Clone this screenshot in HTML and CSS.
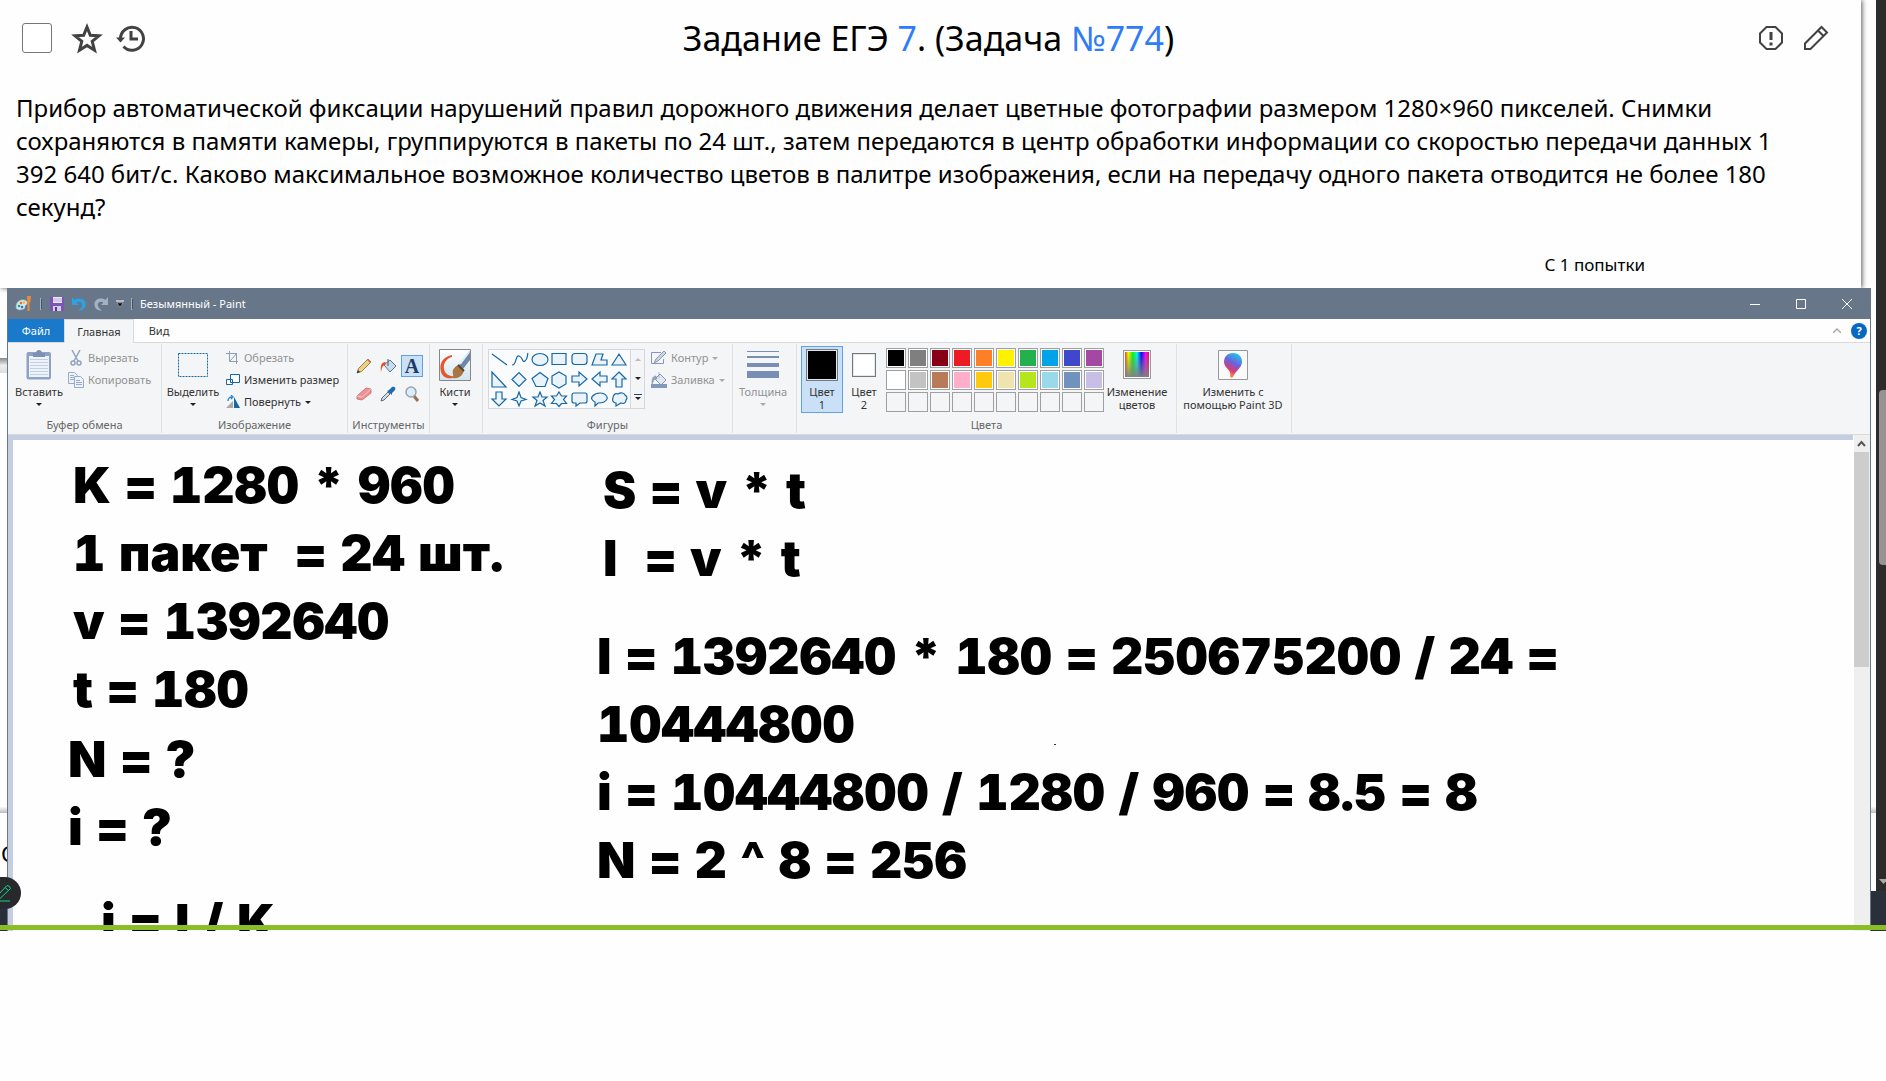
FILE: index.html
```html
<!DOCTYPE html>
<html lang="ru">
<head>
<meta charset="utf-8">
<title>Задание ЕГЭ 7</title>
<link rel="stylesheet" href="styles.css">
</head>
<body>
<div class="screen">
  <main class="page">
    <section class="task">
      <header class="task-head">
        <div class="tools-left">
          <input type="checkbox" class="tick" aria-label="Решено">
          <button class="icon-btn" aria-label="В избранное"><svg width="32" height="32" viewBox="0 0 32 32" fill="none" stroke="#424242" stroke-width="3" stroke-linejoin="miter"><path d="M16 5l3.300 8.200 8.700.6-6.800 5.600 2.300 8.800L16 23.400l-7.500 4.800 2.300-8.800L4 13.800l8.700-.6z"/></svg></button>
          <button class="icon-btn" aria-label="История"><svg width="32" height="32" viewBox="0 0 32 32" fill="none" stroke="#424242" stroke-width="3"><path d="M6.500 17A11.500 11.500 0 1 1 9.500 24.500M17 9v8h7"/><path d="M2 15.500h9l-4.500 5z" fill="#424242" stroke="none"/></svg></button>
        </div>
        <h1>Задание ЕГЭ <a href="#t7">7</a>. (Задача <a href="#774">№774</a>)</h1>
        <div class="tools-right">
          <button class="icon-btn" aria-label="Сообщить об ошибке"><svg width="26" height="26" viewBox="0 0 26 26" fill="none" stroke="#424242" stroke-width="2"><path d="M8.500 2h9L24 8.500v9L17.500 24h-9L2 17.500v-9z"/><path d="M13 7v8M13 17.500v3" stroke-width="3"/></svg></button>
          <button class="icon-btn" aria-label="Редактировать"><svg width="26" height="26" viewBox="0 0 26 26" fill="none" stroke="#424242" stroke-width="2"><path d="M2 24v-5.500L18.500 2 24 7.500 7.500 24zM15 5.500l5.500 5.500"/></svg></button>
        </div>
      </header>
      <p class="statement">Прибор автоматической фиксации нарушений правил дорожного движения делает цветные фотографии размером 1280×960 пикселей. Снимки сохраняются в памяти камеры, группируются в пакеты по 24 шт., затем передаются в центр обработки информации со скоростью передачи данных 1 392 640 бит/с. Каково максимальное возможное количество цветов в палитре изображения, если на передачу одного пакета отводится не более 180 секунд?</p>
      <p class="attempt">С 1 попытки</p>
    </section>
    <div class="seam seam-top"></div>
    <div class="seam seam-bottom"></div>
    <span class="behind">С</span>
    <div class="taskbar"></div>

    <section class="paint">
      <div class="titlebar">
        <div class="quick">
          <svg width="18" height="18" viewBox="0 0 18 18"><path d="M1 12c0-5 4-8 8-7 4 0 4 4 2 5s0 3-2 4-8 2-8-2z" fill="#d3e6ef" stroke="#7fb0c8" stroke-width=".6"/><circle cx="4" cy="11" r="1.300" fill="#2a7"/><circle cx="6" cy="8" r="1.300" fill="#e63"/><circle cx="9" cy="7.500" r="1.200" fill="#fb0"/><circle cx="7" cy="12" r="1.300" fill="#27c"/><path d="M12 1h4l-.5 5-1 2v8h-2V8z" fill="#e88a3c"/></svg>
          <i class="bar"></i>
          <button class="tb" aria-label="Сохранить"><svg width="14" height="14" viewBox="0 0 14 14"><path d="M0 0h14v14H0z" fill="#7b55b5"/><path d="M3 0h9v6H3z" fill="#f1e9f8"/><path d="M3 2h9M3 4h9" stroke="#bda6d8"/><path d="M3 9h8v5H3z" fill="#d8cce8"/><path d="M5 10h2v4H5z" fill="#543b86"/></svg></button>
          <button class="tb" aria-label="Отменить"><svg width="14" height="14" viewBox="0 0 14 14"><path d="M0 0v8h7L4.500 5.500C8 3.500 11 6 10 9c-.5 2-2 3-4 4.500 5 .5 8-3 7.500-7C13 2 7 0 2.500 3z" fill="#2ba1e6"/></svg></button>
          <button class="tb" aria-label="Вернуть"><svg width="14" height="14" viewBox="0 0 14 14"><path d="M14 0v8H7l2.500-2.500C6 3.500 3 6 4 9c.5 2 2 3 4 4.500C3 14 0 10.500.5 6.500 1 2 7 0 11.500 3z" fill="#a5b1c5"/></svg></button>
          <button class="tb" aria-label="Настройка панели"><svg width="8" height="8" viewBox="0 0 8 8"><path d="M0 1h8M0 0" stroke="#fff"/><path d="M1 3h6L4 7z" fill="#000" stroke="#ccc" stroke-width=".5"/></svg></button>
          <i class="bar"></i>
        </div>
        <span class="caption">Безымянный - Paint</span>
        <div class="controls">
          <button aria-label="Свернуть"><svg width="10" height="10"><path d="M0 5.500h10" stroke="#fff"/></svg></button>
          <button aria-label="Развернуть"><svg width="10" height="10"><path d="M.5.500h9v9h-9z" fill="none" stroke="#fff"/></svg></button>
          <button aria-label="Закрыть"><svg width="10" height="10"><path d="M0 0l10 10M10 0L0 10" stroke="#fff"/></svg></button>
        </div>
      </div>
      <nav class="tabs">
        <button class="tab file">Файл</button><button class="tab active">Главная</button><button class="tab">Вид</button>
        <div class="help">
          <svg width="8" height="5" viewBox="0 0 8 5"><path d="M0 5l4-4 4 4" fill="none" stroke="#a5a5a5" stroke-width="1.300"/></svg>
          <button class="q" aria-label="Справка">?</button>
        </div>
      </nav>

      <div class="ribbon">
        <div class="group g-clip">
          <div class="body">
            <button class="big"><span class="pic"><svg width="26" height="30" viewBox="0 0 26 30"><rect x=".5" y="2" width="24.500" height="27.500" rx="2" fill="#8ea2c4"/><path d="M3 6h20v21H3z" fill="#eef2f9"/><path d="M4 9.500h18M4 12.500h18M4 15.500h18M4 18.500h18M4 21.500h18M4 24.500h18" stroke="#c3d0e4"/><path d="M7 7V3h3c0-4 6-4 6 0h3v4z" fill="#7b90b2"/></svg></span>Вставить<i class="dn"></i></button>
            <div class="list">
              <button class="row off"><svg width="16" height="16" viewBox="0 0 16 16" fill="none" stroke="#93a2be" stroke-width="1.500"><path d="M4 0l6 11M12 0L6 11"/><circle cx="5" cy="13" r="2"/><circle cx="11" cy="13" r="2"/></svg>Вырезать</button>
              <button class="row off"><svg width="16" height="16" viewBox="0 0 16 16" fill="#edf1f8" stroke="#9aabc8"><path d="M.5.500h6l3 3v8h-9z"/><path d="M6.500 4.500h6l3 3v8h-9zM8 8.500h4M8 10.500h6M8 12.500h6M2 3.500h4M2 5.500h4M2 7.500h4"/></svg>Копировать</button>
            </div>
          </div>
          <div class="name">Буфер обмена</div>
        </div>
        <div class="group g-image">
          <div class="body">
            <button class="big"><span class="pic"><svg width="30" height="24"><path d="M.5.500h29v23h-29z" fill="none" stroke="#1667a6" stroke-dasharray="2 1"/></svg></span>Выделить<i class="dn"></i></button>
            <div class="list">
              <button class="row off"><svg width="14" height="14" viewBox="0 0 14 14" fill="none" stroke="#8f9db5"><path d="M0 2.500h10.500V13M3.500 0v10.500H12M4 10l7-8"/></svg>Обрезать</button>
              <button class="row"><svg width="14" height="14" viewBox="0 0 14 14" fill="#fff" stroke="#1667a6"><path d="M4.500 1.500h9v8h-9zM.5 6.500h6v5h-6z"/></svg>Изменить размер</button>
              <button class="row"><svg width="14" height="14" viewBox="0 0 14 14"><path d="M0 13l7-7v7z" fill="#aaa"/><path d="M8 13V2l6 11z" fill="#1667a6"/><path d="M2 6c0-3 2-4 4-4M5 0l2 2-2 2" fill="none" stroke="#2586d0" stroke-width="1.300"/></svg>Повернуть<i class="dn"></i></button>
            </div>
          </div>
          <div class="name">Изображение</div>
        </div>
        <div class="group g-tools">
          <div class="body toolgrid">
            <button aria-label="Карандаш"><svg width="16" height="16" viewBox="0 0 16 16"><path d="M1 15l1.500-4.500L12 1l3 3-9.500 9.500z" fill="#f2d07c" stroke="#766743" stroke-width=".8"/><path d="M11 2l3 3 1-1-3-3z" fill="#d66"/><path d="M1 15l1-3 2 2z" fill="#333"/></svg></button>
            <button aria-label="Заливка"><svg width="16" height="16" viewBox="0 0 16 16"><path d="M4 7l6-5 6 6-6 6z" fill="#c7ddef" stroke="#5c7892"/><path d="M8 1v7" stroke="#555"/><path d="M6 4.500C2 3 0 7 1 14c1-4 1-6 4-7z" fill="#e4512c"/></svg></button>
            <button class="on letter" aria-label="Текст">A</button>
            <button aria-label="Ластик"><svg width="16" height="16" viewBox="0 0 16 16"><path d="M1 10l9-8 5 1v4l-9 7-5-1z" fill="#ee9295" stroke="#c96468" stroke-width=".8"/><path d="M1 10l5 1 9-8" fill="none" stroke="#fac5c5"/></svg></button>
            <button aria-label="Палитра"><svg width="16" height="16" viewBox="0 0 16 16"><path d="M1 15l1-3 6-6 2 2-6 6z" fill="#cfe0ed" stroke="#667"/><path d="M7 5l2-1 3-3c3-1 4 1 3 3l-3 3v2z" fill="#1e6cae"/></svg></button>
            <button aria-label="Масштаб"><svg width="16" height="16" viewBox="0 0 16 16"><path d="M10 10l4 5" stroke="#9b7049" stroke-width="3"/><circle cx="7" cy="6" r="5" fill="#dcecf8" stroke="#9aa4ae" stroke-width="1.500"/></svg></button>
          </div>
          <div class="name">Инструменты</div>
        </div>
        <div class="group g-brush">
          <div class="body">
            <button class="big"><span class="pic"><svg width="32" height="32" viewBox="0 0 32 32"><defs><linearGradient id="bg" x2="0" y2="1"><stop stop-color="#fff"/><stop offset="1" stop-color="#d3e5f1"/></linearGradient></defs><path d="M.5.500h31v31H.5z" fill="url(#bg)" stroke="#888"/><path d="M13 6C3 8 0 15 2 23c2 7 11 8 15 4-5 1-11-1-12-7C4 14 8 9 13 8z" fill="#e2572b"/><path d="M31 2v9l-7 9-4-4z" fill="#6c87a8"/><path d="M30 3L21 15" stroke="#e2ebf3" stroke-width="2"/><path d="M20 16l5 5c-1 6-6 9-11 8 1-2-1-6 0-8s4-5 6-5z" fill="#a97540"/><path d="M19 16l6 6" stroke="#59432e" stroke-width="2"/></svg></span>Кисти<i class="dn"></i></button>
          </div>
        </div>
        <div class="group g-shapes">
          <div class="body">
            <div class="gallery">
              <svg width="141" height="58" viewBox="0 0 141 58" fill="#eaf3fa" stroke="#1667a6" stroke-width="1.200"><path d="M3 4l15 11M23 15c5 0 3-10 7-9s3 7 6 5 2-5 3-8" fill="none"/><ellipse cx="51" cy="9.500" rx="8" ry="6"/><path d="M63 3.500h14v11H63z"/><rect x="83" y="3.500" width="15" height="11" rx="3"/><path d="M103 15l4-11h7l-2 6h6v5zM123 15l7-11 7 11z"/><path d="M3 22v15h14zM23 29.500l7-7 7 7-7 7zM43 28.500l8-6 8 6-3 8h-9zM63 26l7-4 7 4v8l-7 4-7-4zM83 26h7v-4l8 7-8 7v-4h-7zM118 26h-7v-4l-8 7 8 7v-4h7zM130 22l7 7h-4v8h-6v-8h-4z"/><path d="M7 42h6v7h4l-7 7-7-7h4zM30 42l2 5.500 5 2-5 1.500-2 5-2-5-5-1.500 5-2zM51 42l2 5h5l-4 3.500 2 5.500-5-3-5 3 2-5.500-4-3.500h5zM70 42l2.500 4h5l-3 3.500 3 4h-5l-2.500 3-2.500-3h-5l3-4-3-3.500h5zM85 43h11q2 0 2 2v6q0 2-2 2h-5l-4 3v-3h-2q-2 0-2-2v-6q0-2 2-2zM106 52c-8-4 0-9 5-9s11 5 4 9c-2 1-4 1-6 1l-3 3zM124 48c0-3 2-5 5-4 3-2 6-1 7 1 3 2 2 4 1 5 0 3-2 4-5 3l-5 3v-3c-3 0-4-3-3-5z"/></svg>
              <div class="spin"><i class="up off"></i><i class="dn"></i><i class="dn more"></i></div>
            </div>
            <div class="list">
              <button class="row off"><svg width="16" height="16" viewBox="0 0 16 16" fill="none" stroke="#8797b5"><path d="M10 2.500H.5v11h12V9"/><path d="M3 13l2-4 8-8 2 2-8 8z" fill="#cbd5e5"/></svg>Контур<i class="dn"></i></button>
              <button class="row off"><svg width="16" height="16" viewBox="0 0 16 16"><path d="M0 12h16v4H0z" fill="#8398bd"/><path d="M4 7l5-5 6 6-5 5z" fill="#e0e8f2" stroke="#8797b5"/><path d="M8 0v6M5 4C1 4 1 8 1 12c2-4 2-5 5-5z" fill="#8fa2c2" stroke="#8797b5" stroke-width=".6"/></svg>Заливка<i class="dn"></i></button>
            </div>
          </div>
          <div class="name">Фигуры</div>
        </div>
        <div class="group g-size">
          <div class="body">
            <button class="big off"><span class="pic"><svg width="32" height="28"><path d="M0 0h32v1H0zM0 5h32v2H0zM0 12h32v4H0zM0 20h32v7H0z" fill="#788eb3"/></svg></span>Толщина<i class="dn"></i></button>
          </div>
        </div>
        <div class="group g-colors">
          <div class="body">
            <button class="big on c1"><span class="pic"><b class="sw black"></b></span>Цвет<br>1</button>
            <button class="big c2"><span class="pic"><b class="sw white"></b></span>Цвет<br>2</button>
            <div class="palette">
              <i style="background:#000"></i><i style="background:#7f7f7f"></i><i style="background:#880015"></i><i style="background:#ed1c24"></i><i style="background:#ff7f27"></i><i style="background:#fff200"></i><i style="background:#22b14c"></i><i style="background:#00a2e8"></i><i style="background:#3f48cc"></i><i style="background:#a349a4"></i>
              <i style="background:#fff"></i><i style="background:#c3c3c3"></i><i style="background:#b97a57"></i><i style="background:#ffaec9"></i><i style="background:#ffc90e"></i><i style="background:#efe4b0"></i><i style="background:#b5e61d"></i><i style="background:#99d9ea"></i><i style="background:#7092be"></i><i style="background:#c8bfe7"></i>
              <i class="e"></i><i class="e"></i><i class="e"></i><i class="e"></i><i class="e"></i><i class="e"></i><i class="e"></i><i class="e"></i><i class="e"></i><i class="e"></i>
            </div>
            <button class="big edit"><span class="pic"><b class="rainbow"></b></span>Изменение<br>цветов</button>
          </div>
          <div class="name">Цвета</div>
        </div>
        <div class="group g-3d">
          <div class="body">
            <button class="big"><span class="pic"><svg width="30" height="30" viewBox="0 0 30 30"><defs><linearGradient id="drop" x1=".7" y1="0" x2=".3" y2="1"><stop stop-color="#19c8ee"/><stop offset=".4" stop-color="#6a63dc"/><stop offset=".7" stop-color="#d93a76"/><stop offset="1" stop-color="#f7b025"/></linearGradient></defs><path d="M.5.500h29v29H.5z" fill="#fafafa" stroke="#999"/><path d="M15 3c6 0 9 4 9 9 0 6-7 9-9 15-1 1-3 1-3-1 2-6-6-8-6-14 0-5 3-9 9-9z" fill="url(#drop)"/></svg></span>Изменить с<br>помощью Paint 3D</button>
          </div>
        </div>
      </div>

      <div class="workspace">
        <div class="canvas">
          <div class="note n1">K = 1280 * 960<br>1 пакет&nbsp; = 24 шт.<br>v = 1392640<br>t = 180</div>
          <div class="note n2">N = ?<br>i = ?</div>
          <div class="note n3">i = I / K</div>
          <div class="note n4">S = v * t<br>I&nbsp; = v * t</div>
          <div class="note n5">I = 1392640 * 180 = 250675200 / 24 =<br>10444800<br>i = 10444800 / 1280 / 960 = 8.5 = 8<br>N = 2 ^ 8 = 256</div>
          <i class="dot"></i>
        </div>
        <div class="vscroll">
          <svg width="15" height="17" viewBox="0 0 15 17"><path d="M4 11l3.500-4 3.500 4" fill="none" stroke="#555" stroke-width="2"/></svg>
          <div class="thumb"></div>
        </div>
      </div>
    </section>
    <button class="pen" aria-label="Рисовать"><svg width="22" height="32" viewBox="0 0 22 32" fill="none" stroke="#14d68a"><path d="M-3 22v-3L7 8.500q3 0 3.500 3L0 21.500zM5 10.500l3.500 3"/><path d="M0 24h10"/></svg></button>
  </main>
  <aside class="pagescroll"><div class="pagethumb"></div><svg width="7" height="5" viewBox="0 0 7 5"><path d="M0 0h9L4.500 5z" fill="#a9a7a8"/></svg></aside>
  <div class="greenline"></div>
</div>
</body>
</html>
```
FILE: styles.css
```css
* { box-sizing: border-box; }
body { margin: 0; background: #fefefe; font-family: "Noto Sans", "Open Sans", sans-serif; color: #000; }
button { font: inherit; color: inherit; background: none; border: 0; padding: 0; margin: 0; }
svg { display: block; flex: none; }

.screen { position: relative; display: flex; overflow: hidden; background: #fefefe; }
.page { position: relative; flex: 1; min-width: 0; }

.task { margin-right: 15px; min-height: 288px; box-shadow: 1px 0 5px #555; background: #fefefe; }
.task-head { display: flex; justify-content: space-between; align-items: center; height: 76px; padding: 0 32px 0 22px; }
.tools-left, .tools-right { flex: 1; display: flex; align-items: center; }
.tools-left { gap: 11px; }
.tools-right { justify-content: flex-end; gap: 19px; }
.tick { appearance: none; width: 30px; height: 30px; margin: 0 8px 0 0; border: 1px solid #767676; border-radius: 3px; background: #fff; }
h1 { margin: 0 0 0 6px; font-size: 34px; line-height: 44px; font-weight: 400; }
h1 a { color: #2f7cf6; text-decoration: none; }
.statement { margin: 15px 64px 0 16px; font-size: 24px; line-height: 33px; }
.attempt { margin: 30px 216px 0 0; text-align: right; font-size: 17px; line-height: 24px; }

.seam { position: absolute; left: 0; right: 0; height: 15px; }
.seam-top { top: 358px; width: 7px; background: linear-gradient(#888, #eee 50%, #ddd); }
.seam-bottom { top: 800px; height: 13px; background: linear-gradient(#fefefe 50%, #bbb); }
.behind { position: absolute; left: 1px; top: 838px; font-size: 22px; line-height: 30px; }
.taskbar { position: absolute; left: 0; right: 0; bottom: 0; height: 40px; background: #29303b; }

.paint { position: relative; margin: 0 5px 0 7px; border: solid #687689; border-width: 0 1px; font-size: 11px; line-height: 16px; background: #fefefe; }
.titlebar { display: flex; align-items: center; height: 31px; background: #687689; margin: 0 -1px; padding: 0 1px 0 8px; color: #fff; }
.quick { display: flex; align-items: center; gap: 7px; }
.bar { width: 2px; height: 12px; border: 1px solid #aab2bd; border-right-color: #465366; }
.tb { margin-left: 1px; }
.caption { margin-left: 7px; }
.controls { margin-left: auto; display: flex; }
.controls button { width: 46px; height: 31px; display: grid; place-items: center; }

.tabs { display: flex; height: 24px; border-bottom: 1px solid #d9dadb; color: #333; }
.tab { height: 23px; width: 50px; }
.file { width: 56px; background: #1979ca; color: #fff; }
.active { width: 70px; height: 24px; background: #f4f5f7; border: 1px solid #d9dadb; border-bottom: 0; }
.help { margin-left: auto; display: flex; align-items: center; gap: 10px; padding-right: 3px; }
.q { width: 16px; height: 16px; border-radius: 50%; background: #0667c5; color: #fff; font-weight: 700; line-height: 16px; }

.ribbon { display: flex; height: 92px; padding-top: 1px; background: #f4f5f7; border-bottom: 1px solid #d9dadb; color: #333; }
.group { display: flex; flex-direction: column; justify-content: space-between; height: 89px; border-right: 1px solid #dfe1e4; }
.body { display: flex; }
.name { text-align: center; color: #666; height: 16px; white-space: nowrap; }
.g-clip { width: 154px; } .g-image { width: 186px; } .g-tools { width: 82px; } .g-brush { width: 53px; }
.g-shapes { width: 250px; } .g-size { width: 64px; } .g-colors { width: 380px; } .g-3d { width: 115px; }
.big { display: flex; flex-direction: column; align-items: center; text-align: center; line-height: 13px; height: 67px; margin-top: 2px; white-space: nowrap; }
.pic { height: 38px; display: grid; place-items: center; padding-bottom: 1px; margin-bottom: 1px; }
.g-clip .big { width: 56px; margin-left: 3px; }
.g-image .big { width: 58px; margin-left: 2px; }
.g-brush .big { width: 50px; }
.g-size .big { width: 60px; }
.g-3d .big { width: 112px; }
.big .dn { margin-top: 5px; }
.dn, .up { display: inline-block; border: solid transparent; border-width: 3px 3px 0; border-top-color: #222; }
.up { border-width: 0 3px 3px; border-bottom-color: #bbb; }
.off { color: #929292; }
.off .dn { border-top-color: #aaa; }
.list { display: flex; flex-direction: column; margin-top: 3px; }
.row { display: flex; align-items: center; gap: 4px; height: 22px; white-space: nowrap; }
.g-clip .list { margin-left: 1px; }
.g-image .list { margin-left: 4px; }
.toolgrid { display: grid; grid-template-columns: repeat(3, 22px); gap: 6px 2px; padding: 11px 0 0 5px; }
.toolgrid button { width: 22px; height: 22px; display: grid; place-items: center; }
.toolgrid .on { border: 1px solid #62a2e4; background: #c9e0f7; }
.toolgrid .letter { font: bold 20px/20px "Liberation Serif", serif; color: #1d3b66; }
.gallery { display: flex; width: 157px; height: 60px; margin: 5px 6px 0 5px; border: 1px solid #d4d7dc; background: #fafbfd; }
.spin { width: 15px; border-left: 1px solid #d4d7dc; display: flex; flex-direction: column; align-items: center; justify-content: space-around; background: #f4f5f7; }
.more { position: relative; }
.more::before { content: ""; position: absolute; left: -4px; top: -6px; width: 8px; height: 1px; background: #345; }

.c1 { width: 37px; margin-left: 4px; background: #c9e0f7; outline: 1px solid #62a2e4; outline-offset: -1px; }
.c1 { width: 42px; }
.c2 { width: 34px; margin-left: 4px; }
.sw { width: 32px; height: 32px; border: 1px solid #777; box-shadow: inset 0 0 0 1px #dbe8f5; }
.black { background: #000; }
.white { width: 24px; height: 24px; background: #fff; }
.palette { display: grid; grid-template-columns: repeat(10, 20px); grid-auto-rows: 20px; gap: 2px; margin: 4px 0 0 5px; }
.palette i { border: 1px solid #a0a0a0; box-shadow: inset 0 0 0 1px #fff; }
.palette .e { box-shadow: none; }
.edit { width: 66px; }
.rainbow { width: 28px; height: 29px; border: 1px solid #999; box-shadow: inset 0 0 0 1px #fff; background: linear-gradient(transparent, #808080), linear-gradient(90deg, red, #ff0, lime, cyan, blue, #f0f, red); }

.workspace { display: flex; height: 496px; background: #c5cde0; }
.canvas { position: relative; flex: 1; margin: 5px 0 0 5px; background: #fefefe; overflow: hidden; }
.vscroll { width: 17px; border-left: 1px solid #fefefe; background: #efefef; }
.thumb { width: 15px; height: 215px; background: #cdcdcd; }
.note { position: absolute; font-family: Inter, "Liberation Sans", sans-serif; font-weight: 900; font-size: 50px; line-height: 68px; font-variant-numeric: tabular-nums; font-variant-ligatures: no-contextual; white-space: nowrap; }
.n1 { left: 60px; top: 11px; }
.n2 { left: 55px; top: 285px; }
.n3 { left: 88px; top: 448px; }
.n4 { left: 590px; top: 16px; }
.n5 { left: 584px; top: 182px; }
.dot { position: absolute; left: 1041px; top: 304px; width: 2px; height: 1px; background: #333; }

.pen { position: absolute; left: 0; bottom: 22px; width: 21px; height: 32px; border-radius: 0 16px 16px 0; background: #27292d; overflow: hidden; }
.pagescroll { position: relative; width: 10px; margin-bottom: 40px; padding: 390px 0 7px 3px; display: flex; flex-direction: column; justify-content: space-between; background: #2c2c2c; box-shadow: 0 40px #29303b; }
.pagethumb { height: 175px; border-radius: 4px 0 0 4px; background: #959394; }
.greenline { position: absolute; left: 0; right: 0; bottom: 1px; height: 5px; background: #8bbd27; }
```
